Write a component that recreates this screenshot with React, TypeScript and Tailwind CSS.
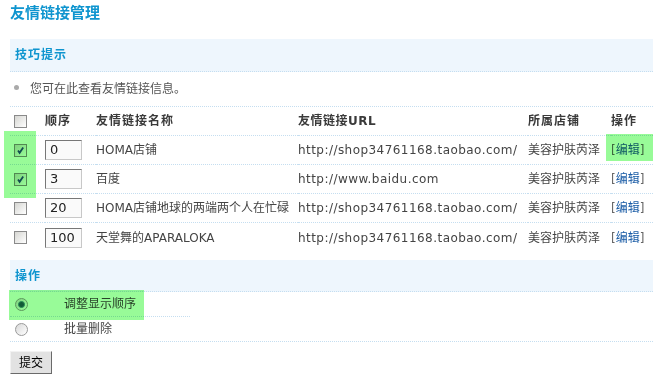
import React from "react";

const rows = [
  { order: "0", name: "HOMA店铺", url: "http://shop34761168.taobao.com/", checked: true },
  { order: "3", name: "百度", url: "http://www.baidu.com", checked: true },
  { order: "20", name: "HOMA店铺地球的两端两个人在忙碌", url: "http://shop34761168.taobao.com/", checked: false },
  { order: "100", name: "天堂舞的APARALOKA", url: "http://shop34761168.taobao.com/", checked: false },
];

function Check({ on }: { on?: boolean }) {
  return (
    <span className="relative block w-[13px] h-[13px] border border-[#8a8a8a] bg-gradient-to-br from-[#d6d6d2] to-white">
      {on && (
        <svg viewBox="0 0 11 11" className="absolute inset-0 w-[11px] h-[11px]">
          <path d="M3 5.5 L4.6 7.8 L8.2 2.6" stroke="#1c4f86" strokeWidth="1.8" fill="none" />
        </svg>
      )}
    </span>
  );
}

function Radio({ on }: { on?: boolean }) {
  return (
    <span className="flex items-center justify-center w-[13px] h-[13px] rounded-full border border-[#9a9a9a] bg-gradient-to-br from-[#d8d8d8] to-white">
      {on && <span className="block w-[7px] h-[7px] rounded-full bg-[#1d5a5a] border border-[#3c8c8c]" />}
    </span>
  );
}

export default function App() {
  return (
    <div className="relative w-[653px] h-[375px] overflow-hidden bg-white text-[12px] text-[#444] font-['DejaVu_Sans','Noto_Sans_CJK_SC',sans-serif]">
      <div className="h-[39px] pl-[10px] pt-[5px]">
        <h1 className="text-[15px] leading-[16px] font-bold text-[#0f95cf]">友情链接管理</h1>
      </div>

      <div className="ml-[10px]">
        <div className="h-[33px] flex items-center pl-[5px] bg-[#eef6fd] border-b border-dotted border-[#c5def0]">
          <span className="font-bold text-[#0f95cf] tracking-[1px]">技巧提示</span>
        </div>
        <div className="h-[35px] flex items-center border-b border-dotted border-[#c5def0] text-[#555]">
          <span className="ml-[4px] w-[5px] h-[5px] rounded-full bg-[#aaa] mb-[3px]" />
          <span className="ml-[11px]">您可在此查看友情链接信息。</span>
        </div>

        <div className="grid grid-cols-[35px_51px_202px_230px_83px_1fr] mb-[8px]">
          <div className="contents font-bold text-[#3a3a3a]">
            <div className="h-[29px] flex items-center pl-[4px] border-b border-dotted border-[#c5def0]"><Check /></div>
            <div className="h-[29px] flex items-center border-b border-dotted border-[#c5def0] tracking-[1px]">顺序</div>
            <div className="h-[29px] flex items-center border-b border-dotted border-[#c5def0] tracking-[1px]">友情链接名称</div>
            <div className="h-[29px] flex items-center border-b border-dotted border-[#c5def0] tracking-[0.5px]">友情链接URL</div>
            <div className="h-[29px] flex items-center border-b border-dotted border-[#c5def0] tracking-[1px]">所属店铺</div>
            <div className="h-[29px] flex items-center border-b border-dotted border-[#c5def0] tracking-[1px]">操作</div>
          </div>
          {rows.map((r, i) => {
            const line = i < rows.length - 1 ? "border-b border-dotted border-[#c5def0]" : "";
            return (
              <div key={i} className="contents">
                <div className={`h-[29px] flex items-center pl-[4px] ${line}`}><Check on={r.checked} /></div>
                <div className={`h-[29px] flex items-center ${line}`}>
                  <div className="w-[37px] h-[20px] pl-[4px] flex items-center bg-[#fafafa] border border-[#c8c8c8] border-t-[#777] border-l-[#777] text-[13px] text-[#222]">
                    {r.order}
                  </div>
                </div>
                <div className={`h-[29px] flex items-center whitespace-nowrap overflow-hidden ${line}`}>{r.name}</div>
                <div className={`h-[29px] flex items-center whitespace-nowrap tracking-[0.45px] ${line}`}>{r.url}</div>
                <div className={`h-[29px] flex items-center whitespace-nowrap ${line}`}>美容护肤芮泽</div>
                <div className={`h-[29px] flex items-center whitespace-nowrap ${line}`}>
                  <span className="text-[#666]">[</span>
                  <span className="text-[#1a5ca6]">编辑</span>
                  <span className="text-[#666]">]</span>
                </div>
              </div>
            );
          })}
        </div>

        <div className="h-[32px] flex items-center pl-[5px] bg-[#eef6fd] border-b border-dotted border-[#c5def0]">
          <span className="font-bold text-[#0f95cf] tracking-[1px]">操作</span>
        </div>
        <div className="w-[180px] h-[25px] flex items-center border-b border-dotted border-[#c5def0]">
          <span className="ml-[5px]"><Radio on /></span>
          <span className="ml-[36px]">调整显示顺序</span>
        </div>
        <div className="h-[25px] flex items-center border-b border-dotted border-[#c5def0]">
          <span className="ml-[5px]"><Radio /></span>
          <span className="ml-[36px]">批量删除</span>
        </div>
        <button className="mt-[9px] w-[42px] h-[23px] flex items-center justify-center bg-[#e2e2e2] border border-[#f2f2f2] border-r-[#6a6a6a] border-b-[#6a6a6a] text-black text-[12px]">
          提交
        </button>
      </div>

      <div className="absolute left-[4px] top-[131px] w-[32px] h-[67px] bg-[#98fb98] mix-blend-multiply" />
      <div className="absolute left-[606px] top-[134px] w-[47px] h-[27px] bg-[#98fb98] mix-blend-multiply" />
      <div className="absolute left-[9px] top-[290px] w-[135px] h-[30px] bg-[#98fb98] mix-blend-multiply" />
    </div>
  );
}
